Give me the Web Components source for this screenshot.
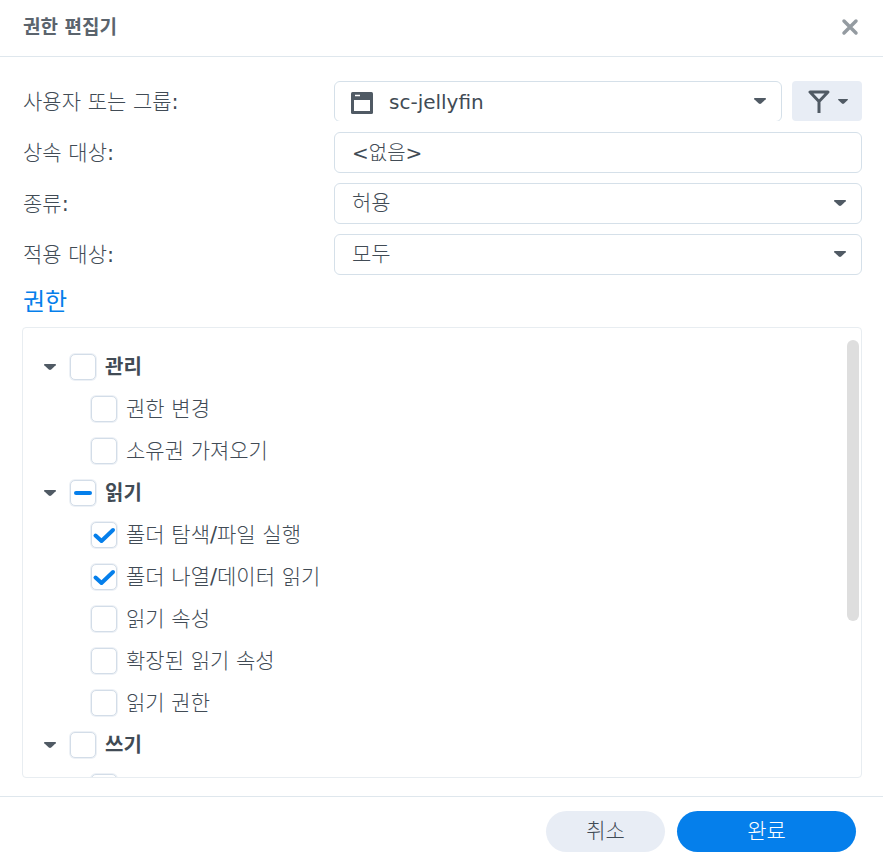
<!DOCTYPE html>
<html lang="ko">
<head>
<meta charset="utf-8">
<meta name="viewport" content="width=device-width, initial-scale=1">
<title>권한 편집기</title>
<style>
  :root {
    --ink: #414b55;
    --line: #d5e0e9;
    --soft: #e8edf5;
    --accent: #057feb;
    --strong: "DejaVu Sans", "Noto Sans CJK KR", sans-serif;
  }
  body {
    margin: 0;
    background: #fff;
    color: var(--ink);
    font: 21px/30px "DejaVu Sans", "Noto Sans CJK KR Light", "Noto Sans CJK KR", sans-serif;
  }
</style>
</head>
<body>
<permission-editor heading="권한 편집기">
  <form-field label="사용자 또는 그룹:" value="sc-jellyfin" kind="user">
    <filter-button slot="after"></filter-button>
  </form-field>
  <form-field label="상속 대상:" value="&lt;없음&gt;" kind="text"></form-field>
  <form-field label="종류:" value="허용" kind="select"></form-field>
  <form-field label="적용 대상:" value="모두" kind="select"></form-field>
  <permission-tree slot="tree" heading="권한">
    <permission-item group label="관리"></permission-item>
    <permission-item label="권한 변경"></permission-item>
    <permission-item label="소유권 가져오기"></permission-item>
    <permission-item group label="읽기" state="mixed"></permission-item>
    <permission-item label="폴더 탐색/파일 실행" state="on"></permission-item>
    <permission-item label="폴더 나열/데이터 읽기" state="on"></permission-item>
    <permission-item label="읽기 속성"></permission-item>
    <permission-item label="확장된 읽기 속성"></permission-item>
    <permission-item label="읽기 권한"></permission-item>
    <permission-item group label="쓰기"></permission-item>
    <permission-item></permission-item>
    <permission-item></permission-item>
    <permission-item></permission-item>
    <permission-item></permission-item>
    <permission-item></permission-item>
  </permission-tree>
  <pill-button slot="actions" label="취소"></pill-button>
  <pill-button slot="actions" label="완료" primary></pill-button>
</permission-editor>

<script>
const caret = (w, h) => `<svg class="caret" width="${w}" height="${h}" viewBox="0 0 12 6" fill="#505a64" aria-hidden="true"><path d="M.6 0h10.8q.9.4.3 1.200L7.200 5.500Q6 6.400 4.800 5.500L.3 1.200Q-.3.4.6 0Z"/></svg>`;

class Base extends HTMLElement {
  connectedCallback() {
    if (this.shadowRoot) return;
    const root = this.attachShadow({ mode: "open" });
    root.innerHTML = `<style>*{box-sizing:border-box}button,input,select{font:inherit;color:inherit;margin:0}${this.css()}</style>${this.html()}`;
    this.ready(root);
  }
  ready() {}
}

customElements.define("pill-button", class extends Base {
  css() {
    return `:host{display:block;flex:0 0 119px}
      :host([primary]){flex-basis:179px}
      button{display:block;width:100%;height:41px;padding:0 0 2px;border:0;border-radius:21px;background:var(--soft)}
      :host([primary]) button{background:var(--accent);color:#fff}`;
  }
  html() { return `<button type="button"></button>`; }
  ready(r) { r.querySelector("button").textContent = this.getAttribute("label"); }
});

customElements.define("filter-button", class extends Base {
  css() {
    return `:host{display:block;flex:0 0 70px}
      button{display:flex;align-items:center;justify-content:center;gap:8px;width:100%;height:40px;padding:0 0 0 2px;border:0;border-radius:4px;background:var(--soft)}`;
  }
  html() {
    return `<button type="button" aria-label="필터">
      <svg width="22" height="24" viewBox="0 0 22 24" fill="none" stroke="#505a64" stroke-width="3" stroke-linejoin="round" aria-hidden="true"><path d="M2 3H20L11 12.500ZM11 12V24"/></svg>
      ${caret(10, 5)}</button>`;
  }
});

customElements.define("form-field", class extends Base {
  css() {
    return `:host{display:flex;align-items:center}
      label{flex:0 0 312px;padding-left:1px}
      .line{flex:1;min-width:0;display:flex;gap:10px}
      .box{flex:1;min-width:0;display:grid;align-items:center}
      .box>*{grid-area:1/1}
      input,select{width:100%;height:41px;padding:0 40px 2px 17px;border:1px solid var(--line);border-radius:6px;background:#fff;appearance:none;outline:0}
      input{font-size:20px}
      .caret{justify-self:end;margin:0 16px 2px 0;pointer-events:none}
      .app{margin-left:17px;pointer-events:none}
      :host([kind=user]) .line{align-self:flex-start}
      :host([kind=user]) .box{height:40px;overflow:hidden;align-items:start}
      :host([kind=user]) select{padding:0 40px 0 54px;font-size:20px}
      :host([kind=user]) .caret{align-self:center}
      :host([kind=user]) .app{align-self:center;margin-top:2px}`;
  }
  html() {
    const kind = this.getAttribute("kind");
    const control = kind === "text" ? `<input id="c" type="text" readonly>` : `<select id="c"><option></option></select>${caret(12, 6)}`;
    const app = kind === "user" ? `<svg class="app" width="22" height="22" viewBox="0 0 22 22" aria-hidden="true"><rect width="22" height="22" rx="1.500" fill="#505a64"/><path d="M3 8h16v11H3Z" fill="#fff"/><path d="M4 3.500h5" stroke="#fff" stroke-width="1.500"/></svg>` : "";
    return `<label for="c"></label><div class="line"><div class="box">${control}${app}</div><slot name="after"></slot></div>`;
  }
  ready(r) {
    r.querySelector("label").textContent = this.getAttribute("label");
    const value = this.getAttribute("value");
    const option = r.querySelector("option");
    if (option) option.textContent = value;
    else r.querySelector("input").value = value;
  }
});

customElements.define("permission-item", class extends Base {
  css() {
    return `:host{display:flex;align-items:center;height:42px;padding-left:68px}
      :host([group]){padding-left:21px;font-family:var(--strong);font-weight:700}
      .toggle{display:flex;padding:0;border:0;background:none;margin-right:14px}
      .tick{display:grid;place-items:center;margin:0 9px 0 0}
      .tick>*{grid-area:1/1}
      input{width:26px;height:26px;border:1px solid #d3dde8;border-radius:5px;box-shadow:0 0 0 1px #edf1f6;appearance:none;background:#fff}
      .tick svg{display:none;pointer-events:none}
      input:checked~.on,input:indeterminate~.mixed{display:block}
      label{padding-bottom:1px}
      :host([group]) label{font-size:20px;padding:0}`;
  }
  html() {
    return `${this.hasAttribute("group") ? `<button class="toggle" type="button" aria-label="접기">${caret(12, 6)}</button>` : ""}
      <span class="tick"><input id="c" type="checkbox">
        <svg class="on" width="26" height="26" viewBox="0 0 26 26" fill="none" stroke="#057feb" stroke-width="4" stroke-linecap="round" stroke-linejoin="round" aria-hidden="true"><path d="M4.500 13.500L10.500 19L22 8"/></svg>
        <svg class="mixed" width="26" height="26" viewBox="0 0 26 26" aria-hidden="true"><rect x="4" y="11" width="18" height="4" rx="2" fill="#057feb"/></svg>
      </span>${this.hasAttribute("label") ? `<label for="c"></label>` : ""}`;
  }
  ready(r) {
    const input = r.querySelector("input");
    const label = r.querySelector("label");
    if (label) label.textContent = this.getAttribute("label");
    else input.setAttribute("aria-label", "쓰기 권한");
    input.checked = this.getAttribute("state") === "on";
    input.indeterminate = this.getAttribute("state") === "mixed";
  }
});

customElements.define("permission-tree", class extends Base {
  css() {
    return `:host{flex:1;min-height:0;display:flex;flex-direction:column}
      h2{margin:0;padding:2px 0 0 1px;font-family:var(--strong);font-size:24px;line-height:50px;font-weight:400;color:var(--accent)}
      .panel{position:relative;flex:1;min-height:0;display:flex;border:1px solid #e8edf1;border-radius:4px;overflow:hidden}
      .scroll{flex:1;overflow-y:auto;scrollbar-width:none;padding:18px 0 10px}
      .track{position:absolute;top:12px;right:2px;bottom:12px;width:12px;pointer-events:none}
      .thumb{height:66%;border-radius:6px;background:#dedede}`;
  }
  html() {
    return `<h2></h2><div class="panel"><div class="scroll"><slot></slot></div><div class="track"><div class="thumb"></div></div></div>`;
  }
  ready(r) {
    r.querySelector("h2").textContent = this.getAttribute("heading");
    const scroll = r.querySelector(".scroll");
    const thumb = r.querySelector(".thumb");
    scroll.addEventListener("scroll", () => {
      const share = scroll.scrollTop / (scroll.scrollHeight - scroll.clientHeight);
      thumb.style.marginTop = share * (thumb.parentElement.clientHeight - thumb.clientHeight) + "px";
    });
  }
});

customElements.define("permission-editor", class extends Base {
  css() {
    return `:host{display:flex;flex-direction:column;height:100vh}
      header{flex:none;display:flex;align-items:center;justify-content:space-between;height:57px;padding:0 24px 2px 23px;border-bottom:1px solid #dfe7ed}
      h1{margin:0;font-family:var(--strong);font-size:19px;font-weight:700;color:#5b646d}
      header button{display:flex;padding:0;border:0;background:none}
      main{flex:1;min-height:0;display:flex;flex-direction:column;padding:24px 21px 18px 22px}
      .fields{display:grid;gap:10px;grid-auto-rows:41px}
      footer{flex:none;display:flex;justify-content:flex-end;gap:12px;padding:14px 27px 10px;border-top:1px solid #dfe7ed}`;
  }
  html() {
    return `<header><h1></h1><button type="button" aria-label="닫기"><svg width="18" height="18" viewBox="0 0 18 18" stroke="#949ba1" stroke-width="3.500" stroke-linecap="round" aria-hidden="true"><path d="M3 3L15 15M15 3L3 15"/></svg></button></header>
      <main><div class="fields"><slot></slot></div><slot name="tree"></slot></main>
      <footer><slot name="actions"></slot></footer>`;
  }
  ready(r) { r.querySelector("h1").textContent = this.getAttribute("heading"); }
});
</script>
</body>
</html>
